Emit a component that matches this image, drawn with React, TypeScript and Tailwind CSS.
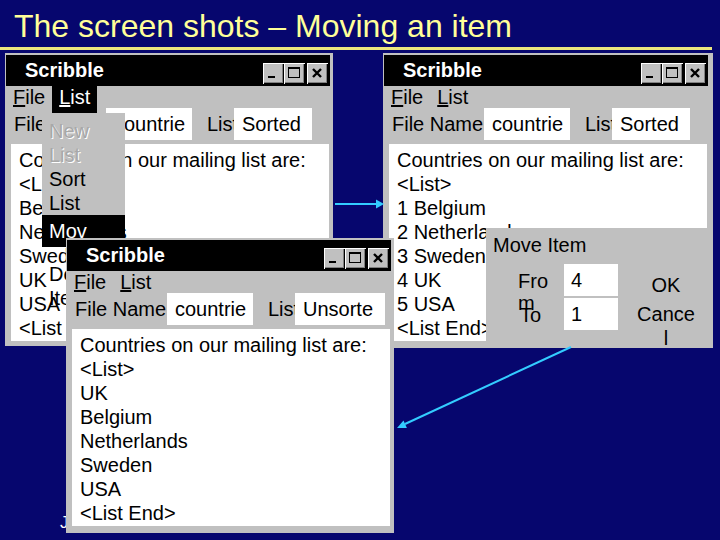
const FONT = "font-['Liberation_Sans',Arial,sans-serif]"

function MinIcon() {
  return (
    <svg width="17" height="17" viewBox="0 0 17 17">
      <rect x="3" y="11" width="7" height="2" fill="#000" />
    </svg>
  )
}

function MaxIcon() {
  return (
    <svg width="17" height="17" viewBox="0 0 17 17">
      <rect x="2.5" y="2.5" width="11" height="10" fill="none" stroke="#000" strokeWidth="1" />
      <rect x="2" y="2" width="12" height="2" fill="#000" />
    </svg>
  )
}

function CloseIcon() {
  return (
    <svg width="17" height="17" viewBox="0 0 17 17">
      <path d="M4 4 L12 12 M12 4 L4 12" stroke="#000" strokeWidth="2.4" />
    </svg>
  )
}

function TitleButton({ children }: { children: React.ReactNode }) {
  return (
    <div className="flex h-[21px] w-[21px] items-center justify-center bg-[#c0c0c0] shadow-[inset_1px_1px_0_#ffffff,inset_-1px_-1px_0_#000000,inset_-2px_-2px_0_#808080]">
      {children}
    </div>
  )
}

type WindowProps = {
  position: string
  listOpen?: boolean
  listValue: string
  listBoxWidth: string
  lines: string[]
}

function ScribbleWindow({ position, listOpen, listValue, listBoxWidth, lines }: WindowProps) {
  return (
    <div className={`absolute bg-[#c0c0c0] pl-[1px] pt-[2px] ${position}`}>
      {/* title bar */}
      <div className="flex h-[31px] w-[324px] justify-between bg-black">
        <span className="pl-[19px] text-[20px] font-bold leading-[31px] text-white">Scribble</span>
        <div className="flex items-start pr-[2px] pt-[8px]">
          <TitleButton>
            <MinIcon />
          </TitleButton>
          <TitleButton>
            <MaxIcon />
          </TitleButton>
          <div className="ml-[2px]">
            <TitleButton>
              <CloseIcon />
            </TitleButton>
          </div>
        </div>
      </div>
      {/* menu bar */}
      <div className="flex h-[22px] items-start text-[20px] leading-[22px] text-black">
        <span className="h-[27px] px-[7px]">
          <span className="underline">F</span>ile
        </span>
        <span className={listOpen ? 'h-[27px] bg-black px-[7px] text-white' : 'h-[27px] px-[7px]'}>
          <span className="underline">L</span>ist
        </span>
      </div>
      {/* file name / list row */}
      <div className="flex h-[32px] items-center pl-[8px] text-[20px] text-black">
        <span className="w-[92px] whitespace-nowrap">File Name</span>
        <span className="h-[32px] w-[86px] bg-white pl-[8px] leading-[32px]">countrie</span>
        <span className="ml-[13px] w-[29px] overflow-hidden whitespace-nowrap pl-[2px]">List</span>
        <span className={`h-[32px] overflow-hidden whitespace-nowrap bg-white pl-[8px] leading-[32px] ${listBoxWidth}`}>
          {listValue}
        </span>
      </div>
      {/* document */}
      <div className="ml-[5px] mt-[4px] h-[197px] w-[318px] overflow-hidden bg-white pl-[8px] pt-[4px] text-[20px] leading-[24px] text-black">
        {lines.map((line, i) => (
          <div key={i} className="whitespace-nowrap">
            {line}
          </div>
        ))}
      </div>
    </div>
  )
}

function ListMenu() {
  const disabled = 'h-[24px] pl-[7px] text-[#a8a8a8] [text-shadow:1px_1px_0_#ffffff]'
  return (
    <div className="absolute left-[42px] top-[113px] z-20 w-[83px] text-[20px] leading-[24px] text-black">
      <div className="bg-[#c0c0c0] pt-[6px]">
        <div className={disabled}>New</div>
        <div className={disabled}>List</div>
        <div className="h-[24px] pl-[7px]">Sort</div>
        <div className="h-[24px] pl-[7px]">List</div>
        <div className="h-[32px] bg-black pl-[7px] leading-[32px] text-white">Mov</div>
      </div>
      <div className="pl-[7px] pt-[15px]">
        <div className="h-[24px]">Delete</div>
        <div className="h-[24px]">Item</div>
      </div>
    </div>
  )
}

function MoveItemDialog() {
  return (
    <div className="absolute left-[486px] top-[228px] z-30 h-[120px] w-[227px] bg-[#c0c0c0] pl-[7px] pt-[5px] text-[20px] text-black">
      <div className="leading-[24px]">Move Item</div>
      <div className="mt-[7px] flex pl-[25px]">
        <div className="flex flex-col gap-[2px]">
          <div className="flex h-[32px] items-start">
            <div className="w-[40px] break-all pt-[6px] leading-[22px]">From</div>
            <div className="ml-[6px] h-[32px] w-[54px] bg-white pl-[7px] leading-[32px]">4</div>
          </div>
          <div className="flex h-[32px] items-start">
            <div className="w-[40px] pl-[2px] pt-[6px] leading-[22px]">To</div>
            <div className="ml-[6px] h-[32px] w-[54px] bg-white pl-[7px] leading-[32px]">1</div>
          </div>
        </div>
        <div className="ml-[18px] mt-[9px] flex w-[60px] flex-col items-center gap-[5px] text-center leading-[24px]">
          <div>OK</div>
          <div className="w-[60px] break-all">Cancel</div>
        </div>
      </div>
    </div>
  )
}

function Arrows() {
  return (
    <svg className="pointer-events-none absolute left-0 top-0 z-50" width="720" height="540" viewBox="0 0 720 540">
      <line x1="335" y1="204" x2="377" y2="204" stroke="#33ccff" strokeWidth="2" />
      <polygon points="376,199.5 384,204 376,208.5" fill="#33ccff" />
      <line x1="571" y1="347" x2="405" y2="424" stroke="#33ccff" strokeWidth="2" />
      <polygon points="397,428 406.9,427.9 403.5,420.6" fill="#33ccff" />
    </svg>
  )
}

export default function App() {
  return (
    <div className={`relative h-[540px] w-[720px] overflow-hidden bg-[#06066e] ${FONT}`}>
      <div className="pl-[14px] pt-[8px] text-[32px] leading-[36px] text-[#ffff99]">
        The screen shots – Moving an item
      </div>
      <div className="mt-[3px] h-[3px] w-[712px] bg-[#ece67e]" />

      <div className="absolute left-[60px] top-[510px] text-[17px] text-white">J</div>

      <ScribbleWindow
        position="left-[5px] top-[53px] z-10 h-[293px] w-[328px]"
        listOpen
        listValue="Sorted"
        listBoxWidth="w-[78px]"
        lines={[
          'Countries on our mailing list are:',
          '<List>',
          'Belgium',
          'Netherlands',
          'Sweden',
          'UK',
          'USA',
          '<List End>',
        ]}
      />
      <ListMenu />

      <ScribbleWindow
        position="left-[383px] top-[53px] z-10 h-[295px] w-[330px]"
        listValue="Sorted"
        listBoxWidth="w-[78px]"
        lines={[
          'Countries on our mailing list are:',
          '<List>',
          '1 Belgium',
          '2 Netherlands',
          '3 Sweden',
          '4 UK',
          '5 USA',
          '<List End>',
        ]}
      />
      <MoveItemDialog />

      <ScribbleWindow
        position="left-[66px] top-[238px] z-40 h-[295px] w-[328px]"
        listValue="Unsorte"
        listBoxWidth="w-[90px]"
        lines={[
          'Countries on our mailing list are:',
          '<List>',
          'UK',
          'Belgium',
          'Netherlands',
          'Sweden',
          'USA',
          '<List End>',
        ]}
      />

      <Arrows />
    </div>
  )
}
